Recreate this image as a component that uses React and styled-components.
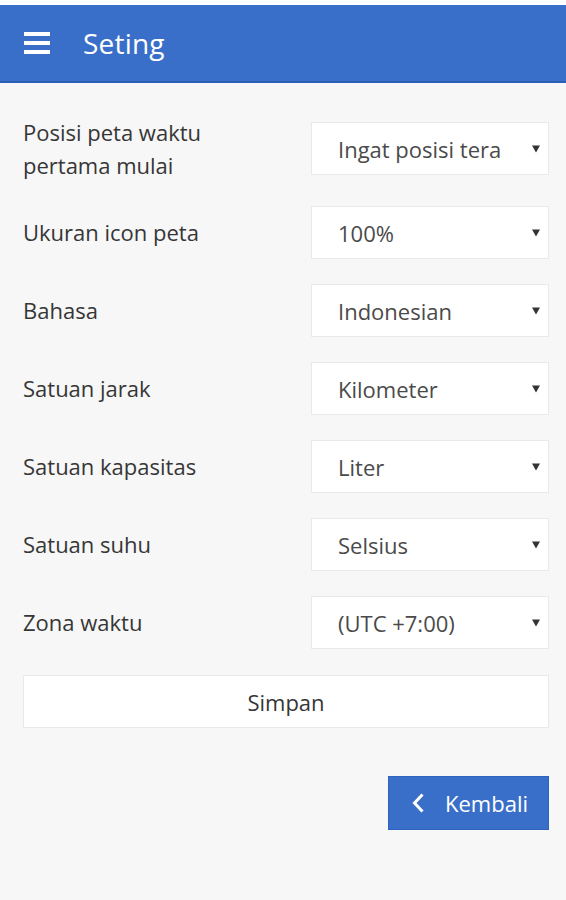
import React from "react";
import styled, { createGlobalStyle } from "styled-components";

const GlobalStyle = createGlobalStyle`
  html, body {
    margin: 0;
    padding: 0;
    background: #f7f7f7;
    font-family: "Open Sans", "Noto Sans", sans-serif;
  }
`

const Page = styled.div`
  min-height: 900px;
  background: #f7f7f7;
  border-top: 5px solid #ffffff;
  box-sizing: border-box;
`

const Header = styled.header`
  height: 78px;
  box-sizing: border-box;
  background: #3a6fc9;
  border-bottom: 2px solid #2c60b6;
  display: flex;
  align-items: center;
  padding-left: 24px;
`

const Title = styled.h1`
  margin: 0 0 0 33px;
  font-size: 28px;
  font-weight: 400;
  color: #ffffff;
  letter-spacing: 0.2px;
`

const Content = styled.div`
  padding: 33px 17px 0 23px;
  display: flex;
  flex-direction: column;
  gap: 25px;
`

const Row = styled.div`
  display: flex;
  align-items: center;
  justify-content: space-between;
  min-height: 53px;
`

const Label = styled.div`
  width: 250px;
  font-size: 22px;
  line-height: 32.5px;
  color: #363636;
`

const SelectWrap = styled.div`
  position: relative;
  width: 238px;
  height: 53px;
`

const Select = styled.select`
  appearance: none;
  -webkit-appearance: none;
  width: 100%;
  height: 100%;
  box-sizing: border-box;
  border: 1px solid #e9e9e9;
  border-radius: 0;
  background: #ffffff;
  padding: 0 46px 0 26px;
  font-family: "Open Sans", sans-serif;
  font-size: 22px;
  color: #4a4a4a;
  outline: none;
`

const Arrow = styled.span`
  position: absolute;
  right: 9px;
  top: 50%;
  transform: translateY(-50%);
  width: 0;
  height: 0;
  border-left: 4px solid transparent;
  border-right: 4px solid transparent;
  border-top: 7px solid #333333;
  pointer-events: none;
`

const SaveButton = styled.button`
  height: 53px;
  width: 100%;
  box-sizing: border-box;
  margin-top: 1px;
  background: #ffffff;
  border: 1px solid #e9e9e9;
  font-family: "Open Sans", sans-serif;
  font-size: 22px;
  color: #363636;
  cursor: pointer;
`

const Footer = styled.div`
  display: flex;
  justify-content: flex-end;
  margin-top: 48px;
  padding-right: 17px;
`

const BackButton = styled.button`
  display: flex;
  align-items: center;
  gap: 21px;
  width: 161px;
  height: 54px;
  box-sizing: border-box;
  padding: 0 0 0 23px;
  background: #3a6fc9;
  border: 1px solid #2f64bd;
  color: #ffffff;
  font-family: "Open Sans", sans-serif;
  font-size: 22px;
  cursor: pointer;
`

const settings = [
  { label: "Posisi peta waktu pertama mulai", value: "Ingat posisi terakhir" },
  { label: "Ukuran icon peta", value: "100%" },
  { label: "Bahasa", value: "Indonesian" },
  { label: "Satuan jarak", value: "Kilometer" },
  { label: "Satuan kapasitas", value: "Liter" },
  { label: "Satuan suhu", value: "Selsius" },
  { label: "Zona waktu", value: "(UTC +7:00)" },
]

const MenuIcon = () => (
  <svg width="26" height="24" viewBox="0 0 26 24">
    <rect x="0" y="1" width="26" height="4" fill="#fff" />
    <rect x="0" y="10" width="26" height="4" fill="#fff" />
    <rect x="0" y="19" width="26" height="4" fill="#fff" />
  </svg>
)

const ChevronLeft = () => (
  <svg width="12" height="20" viewBox="0 0 12 20">
    <polyline points="10.5,1.5 2.5,10 10.5,18.5" fill="none" stroke="#fff" strokeWidth="3" />
  </svg>
)

export default function App() {
  return (
    <Page>
      <GlobalStyle />
      <Header>
        <MenuIcon />
        <Title>Seting</Title>
      </Header>
      <Content>
        {settings.map(s => (
          <Row key={s.label}>
            <Label>{s.label}</Label>
            <SelectWrap>
              <Select defaultValue={s.value}>
                <option value={s.value}>{s.value}</option>
              </Select>
              <Arrow />
            </SelectWrap>
          </Row>
        ))}
        <SaveButton>Simpan</SaveButton>
      </Content>
      <Footer>
        <BackButton>
          <ChevronLeft />
          Kembali
        </BackButton>
      </Footer>
    </Page>
  )
}
